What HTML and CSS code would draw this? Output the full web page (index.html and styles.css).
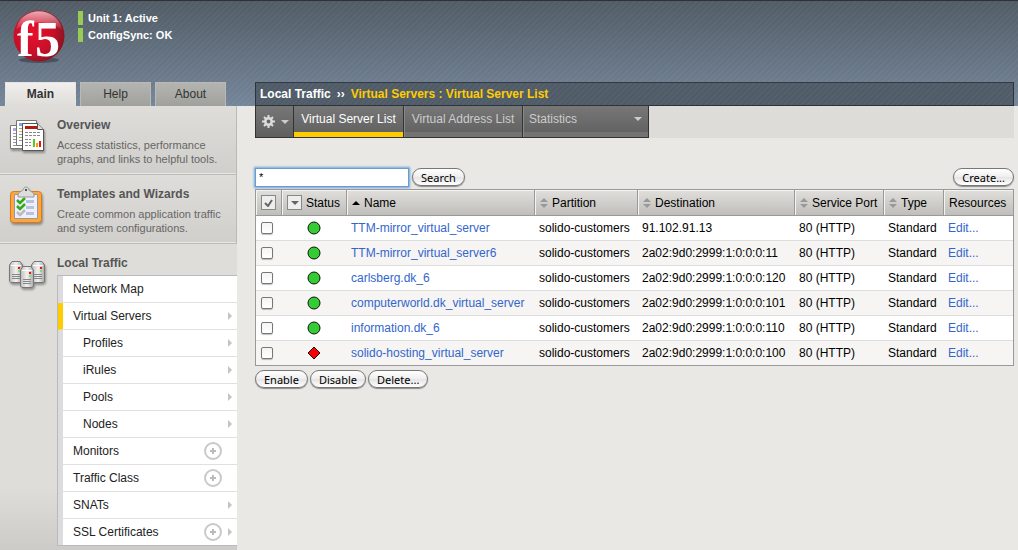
FILE: index.html
```html
<!DOCTYPE html>
<html lang="en">
<head>
<meta charset="utf-8">
<title>Virtual Server List</title>
<link rel="stylesheet" href="styles.css">
</head>
<body>
<svg class="defs" width="0" height="0" aria-hidden="true">
  <defs>
    <symbol id="sort" viewBox="0 0 8 10"><path d="M4 0 8 4H0zM0 6h8L4 10z" fill="#999"/></symbol>
    <symbol id="plus" viewBox="0 0 18 18"><circle cx="9" cy="9" r="8" fill="#fff" stroke="#c9c9c9" stroke-width="2"/><path d="M6 9h6M9 6v6" stroke="#bbb" stroke-width="2"/></symbol>
    <symbol id="arrow" viewBox="0 0 4 8"><path d="M0 0 4 4 0 8z" fill="#c4c4c4"/></symbol>
    <symbol id="up" viewBox="0 0 14 14"><circle cx="7" cy="7" r="6" fill="#3c3" stroke="#111"/></symbol>
    <symbol id="down" viewBox="0 0 14 14"><path d="M7 1 13 7 7 13 1 7z" fill="#f00" stroke="#111"/></symbol>
    <linearGradient id="srv" x2="1" y2="0"><stop offset="0" stop-color="#bbb"/><stop offset=".5" stop-color="#f2f2f2"/><stop offset="1" stop-color="#aaa"/></linearGradient>
    <symbol id="server" viewBox="0 0 14 23"><path d="M.5 4 3 .5h8L13.500 4v16L12 21.500H2L.5 20z" fill="url(#srv)" stroke="#777"/><path d="M2 4.500h10" stroke="#fff"/><path d="M3 13.500h8M3 15.500h8M3 17.500h8" stroke="#888"/><path d="M9 6h2v2H9z" fill="#f01020"/><path d="M9 9h2v2H9z" fill="#80e060"/></symbol>
  </defs>
</svg>

<header class="banner">
  <div class="banner-left">
    <div class="identity">
      <svg class="logo" width="54" height="60" viewBox="0 0 54 60" role="img" aria-label="f5">
        <defs>
          <radialGradient id="ball" cx=".4" cy=".45" r=".6"><stop offset="0" stop-color="#e8102c"/><stop offset=".65" stop-color="#c80f29"/><stop offset="1" stop-color="#8c1420"/></radialGradient>
          <linearGradient id="gloss" x2="0" y2="1"><stop offset="0" stop-color="#fff" stop-opacity=".65"/><stop offset="1" stop-color="#fff" stop-opacity=".05"/></linearGradient>
        </defs>
        <ellipse cx="27" cy="50" rx="20" ry="3" fill="#333c46" opacity=".6"/>
        <circle cx="27" cy="26" r="25.500" fill="url(#ball)"/>
        <path d="M4 20C8-5 46-5 50 20 38 10 16 10 4 20z" fill="url(#gloss)"/>
        <text x="5" y="46" class="logo-f">f</text>
        <text x="23" y="46" class="logo-5">5</text>
      </svg>
      <ul class="unit-status">
        <li>Unit 1: Active</li>
        <li>ConfigSync: OK</li>
      </ul>
    </div>
    <nav class="main-tabs">
      <a class="main-tab current" href="#">Main</a>
      <a class="main-tab" href="#">Help</a>
      <a class="main-tab" href="#">About</a>
    </nav>
  </div>
  <h1 class="crumbs"><span>Local Traffic</span><span>››</span><span class="crumb-here">Virtual Servers : Virtual Server List</span></h1>
</header>

<div class="page">
  <aside class="sidebar">
    <section class="panel">
      <svg class="panel-icon" width="38" height="38" viewBox="0 0 38 38" aria-hidden="true">
        <path d="M1.500 8.500h17v23h-17z" fill="#fff" stroke="#777"/>
        <path d="M4 11h4v3H4z" fill="#b8a0e8"/><path d="M4 16.500h5M4 19.500h5M4 22.500h5M4 25.500h5M4 28.500h5" stroke="#999"/>
        <path d="M7.500 3.500h20v25h-20z" fill="#fff" stroke="#777"/>
        <path d="M10 6h6v3h-6z" fill="#80a8e0"/><path d="M10 11.500h5M10 17.500h5M10 23.500h4" stroke="#999"/><path d="M10 14.500h4" stroke="#e8c020"/><path d="M10 20.500h4" stroke="#70d040"/>
        <path d="M13.500 6.500h15l6 6v21h-21z" fill="#fff" stroke="#555"/>
        <path d="M28.500 6.500v6h6" fill="#ddd" stroke="#555"/>
        <path d="M16 9h12v3H16z" fill="#b01c10"/>
        <path d="M16 15.500h16M16 18.500h16M16 22.500h6M16 25.500h6M16 28.500h6" stroke="#888" stroke-dasharray="3 1"/>
        <path d="M24 22h2v8h-2z" fill="#5c2"/><path d="M27 26h2v4h-2z" fill="#f90"/><path d="M30 24h2v6h-2z" fill="#e11"/>
      </svg>
      <div>
        <h2>Overview</h2>
        <p>Access statistics, performance graphs, and links to helpful tools.</p>
      </div>
    </section>
    <section class="panel">
      <svg class="panel-icon" width="38" height="42" viewBox="0 3 38 42" aria-hidden="true">
        <rect x="1.500" y="8.500" width="31" height="31" rx="3" fill="#fda640" stroke="#d97a18"/>
        <path d="M5.500 11.500h23v24h-23z" fill="#eef" stroke="#999"/>
        <path d="M17 17h8v3h-8zM17 23h8v3h-8zM17 29h8v3h-8z" fill="#b8c2dc"/>
        <path d="M8 17l3 3 5-5M8 23l3 3 5-5" fill="none" stroke="#3a1" stroke-width="2.500"/>
        <path d="M8 29l3 3 5-5" fill="none" stroke="#bbb" stroke-width="2.500"/>
        <path d="M9 12c0-3 3-3 5-5 1-4 5-4 6 0 2 2 5 2 5 5v2H9z" fill="#ddd" stroke="#999"/><circle cx="17" cy="7" r="1" fill="#222"/>
      </svg>
      <div>
        <h2>Templates and Wizards</h2>
        <p>Create common application traffic and system configurations.</p>
      </div>
    </section>
    <section class="panel panel-open">
      <svg class="panel-icon" width="38" height="36" viewBox="0 0 38 36" aria-hidden="true">
        <use href="#server" x="0" y="6" width="14" height="23"/>
        <use href="#server" x="22" y="6" width="14" height="23"/>
        <use href="#server" x="11" y="11" width="14" height="23"/>
      </svg>
      <div class="panel-body">
        <h2>Local Traffic</h2>
        <ul class="menu">
          <li><a href="#">Network Map</a></li>
          <li class="active"><a href="#">Virtual Servers</a><svg class="arrow"><use href="#arrow"/></svg></li>
          <li class="sub"><a href="#">Profiles</a><svg class="arrow"><use href="#arrow"/></svg></li>
          <li class="sub"><a href="#">iRules</a><svg class="arrow"><use href="#arrow"/></svg></li>
          <li class="sub"><a href="#">Pools</a><svg class="arrow"><use href="#arrow"/></svg></li>
          <li class="sub"><a href="#">Nodes</a><svg class="arrow"><use href="#arrow"/></svg></li>
          <li><a href="#">Monitors</a><svg class="plus"><use href="#plus"/></svg><span class="arrow"></span></li>
          <li><a href="#">Traffic Class</a><svg class="plus"><use href="#plus"/></svg><span class="arrow"></span></li>
          <li><a href="#">SNATs</a><svg class="arrow"><use href="#arrow"/></svg></li>
          <li><a href="#">SSL Certificates</a><svg class="plus"><use href="#plus"/></svg><svg class="arrow"><use href="#arrow"/></svg></li>
        </ul>
      </div>
    </section>
  </aside>

  <main class="content">
    <nav class="tabs">
      <button class="tab tab-gear" type="button" aria-label="Options">
        <svg width="13" height="13" viewBox="0 0 13 13"><path d="M6.500 0v13M0 6.500h13M2 2l9 9M11 2l-9 9" stroke="#ddd" stroke-width="2"/><circle cx="6.500" cy="6.500" r="3.200" fill="#666" stroke="#ddd" stroke-width="2.500"/></svg>
        <svg width="8" height="4" viewBox="0 0 8 4"><path d="M0 0h8L4 4z" fill="#ccc"/></svg>
      </button>
      <a class="tab tab-servers selected" href="#">Virtual Server List</a>
      <a class="tab tab-addresses" href="#">Virtual Address List</a>
      <a class="tab tab-wide" href="#">Statistics <svg width="8" height="4" viewBox="0 0 8 4"><path d="M0 0h8L4 4z" fill="#ccc"/></svg></a>
    </nav>

    <form class="toolbar">
      <input class="search" type="text" value="*" aria-label="Search filter">
      <button class="pill" type="button">Search</button>
      <button class="pill create" type="button">Create...</button>
    </form>

    <table class="servers">
      <colgroup><col class="c-check"><col class="c-status"><col><col class="c-part"><col class="c-dest"><col class="c-port"><col class="c-type"><col class="c-res"></colgroup>
      <thead>
        <tr>
          <th><div class="head"><button class="mini" type="button" aria-label="Select all"><svg width="9" height="8" viewBox="0 0 9 8"><path d="M1 4l3 3 4-6" fill="none" stroke="#666" stroke-width="2"/></svg></button></div></th>
          <th><div class="head"><button class="mini" type="button" aria-label="Filter by status"><svg width="8" height="4" viewBox="0 0 8 4"><path d="M0 0h8L4 4z" fill="#666"/></svg></button>Status</div></th>
          <th><div class="head"><svg width="8" height="4" viewBox="0 0 8 4"><path d="M0 4h8L4 0z" fill="#000"/></svg>Name</div></th>
          <th><div class="head"><svg class="sort"><use href="#sort"/></svg>Partition</div></th>
          <th><div class="head"><svg class="sort"><use href="#sort"/></svg>Destination</div></th>
          <th><div class="head"><svg class="sort"><use href="#sort"/></svg>Service Port</div></th>
          <th><div class="head"><svg class="sort"><use href="#sort"/></svg>Type</div></th>
          <th><div class="head">Resources</div></th>
        </tr>
      </thead>
      <tbody>
        <tr><td><input type="checkbox" aria-label="TTM-mirror_virtual_server"></td><td class="state"><svg><use href="#up"/></svg></td><td><a href="#">TTM-mirror_virtual_server</a></td><td>solido-customers</td><td>91.102.91.13</td><td>80 (HTTP)</td><td>Standard</td><td><a href="#">Edit...</a></td></tr>
        <tr><td><input type="checkbox" aria-label="TTM-mirror_virtual_server6"></td><td class="state"><svg><use href="#up"/></svg></td><td><a href="#">TTM-mirror_virtual_server6</a></td><td>solido-customers</td><td>2a02:9d0:2999:1:0:0:0:11</td><td>80 (HTTP)</td><td>Standard</td><td><a href="#">Edit...</a></td></tr>
        <tr><td><input type="checkbox" aria-label="carlsberg.dk_6"></td><td class="state"><svg><use href="#up"/></svg></td><td><a href="#">carlsberg.dk_6</a></td><td>solido-customers</td><td>2a02:9d0:2999:1:0:0:0:120</td><td>80 (HTTP)</td><td>Standard</td><td><a href="#">Edit...</a></td></tr>
        <tr><td><input type="checkbox" aria-label="computerworld.dk_virtual_server"></td><td class="state"><svg><use href="#up"/></svg></td><td><a href="#">computerworld.dk_virtual_server</a></td><td>solido-customers</td><td>2a02:9d0:2999:1:0:0:0:101</td><td>80 (HTTP)</td><td>Standard</td><td><a href="#">Edit...</a></td></tr>
        <tr><td><input type="checkbox" aria-label="information.dk_6"></td><td class="state"><svg><use href="#up"/></svg></td><td><a href="#">information.dk_6</a></td><td>solido-customers</td><td>2a02:9d0:2999:1:0:0:0:110</td><td>80 (HTTP)</td><td>Standard</td><td><a href="#">Edit...</a></td></tr>
        <tr><td><input type="checkbox" aria-label="solido-hosting_virtual_server"></td><td class="state"><svg><use href="#down"/></svg></td><td><a href="#">solido-hosting_virtual_server</a></td><td>solido-customers</td><td>2a02:9d0:2999:1:0:0:0:100</td><td>80 (HTTP)</td><td>Standard</td><td><a href="#">Edit...</a></td></tr>
      </tbody>
    </table>

    <div class="actions">
      <button class="pill" type="button">Enable</button>
      <button class="pill" type="button">Disable</button>
      <button class="pill" type="button">Delete...</button>
    </div>
  </main>
</div>
</body>
</html>
```

FILE: styles.css
```css
* { box-sizing: border-box; }

body {
  margin: 0;
  min-height: 100vh;
  display: flex;
  flex-direction: column;
  background: #e9e8e4;
  color: #000;
  font: 12px/16px "Liberation Sans", Arial, sans-serif;
}

ul { list-style: none; margin: 0; padding: 0; }
h1, h2, p { margin: 0; }
a { color: inherit; text-decoration: none; }
svg { flex: none; }
.defs { position: absolute; }

.banner {
  display: grid;
  grid-template-columns: 237px 1fr;
  column-gap: 18px;
  align-items: end;
  padding-right: 4px;
  border-top: 1px solid #332f35;
  background:
    repeating-linear-gradient(135deg, rgba(255,255,255,.03) 0 2px, transparent 2px 4px),
    linear-gradient(#505b65, #75869a);
}

.identity { display: flex; gap: 12px; padding: 9px 0 0 12px; height: 81px; }
.logo { overflow: visible; }
.logo-f, .logo-5 { font: bold 50px "Liberation Serif", serif; fill: #fff; }
.unit-status { padding-top: 1px; font-weight: bold; font-size: 11px; line-height: 14px; color: #fff; }
.unit-status li { border-left: 5px solid #9c5; padding-left: 5px; margin-bottom: 3px; }

.main-tabs { display: flex; gap: 4px; padding-left: 5px; }
.main-tab {
  width: 71px;
  height: 24px;
  border: 1px solid #b9b9b5;
  border-bottom: 0;
  background: linear-gradient(#b4b5b0, #a0a19c);
  color: #333;
  line-height: 22px;
  text-align: center;
}
.main-tab.current { background: linear-gradient(#f0efed, #deddd9); border-color: #e6e5e2; font-weight: bold; }

.crumbs {
  display: flex;
  gap: 6px;
  height: 24px;
  padding-left: 4px;
  border: 1px solid #2d3338;
  border-top-color: #333a41;
  background:
    repeating-linear-gradient(135deg, rgba(255,255,255,.03) 0 2px, transparent 2px 4px),
    #4f5b67;
  color: #fff;
  font-size: 12px;
  line-height: 22px;
}
.crumb-here { color: #fc0; }

.page { flex: 1; display: grid; grid-template-columns: 237px 1fr; column-gap: 18px; }

.sidebar { display: flex; flex-direction: column; background: #deddd9; color: #666; }
.panel {
  display: grid;
  grid-template-columns: 38px 1fr;
  column-gap: 10px;
  height: 69px;
  padding: 11px 8px 0 9px;
  border-right: 1px solid #b9b9b7;
  border-bottom: 1px solid #bbb;
  background: linear-gradient(#deddd9, #d0cfcb);
  box-shadow: inset 0 -1px #e8e7e4;
}
.panel h2 { color: #555; font-size: 12px; line-height: 16px; }
.panel p { margin-top: 5px; font-size: 11px; line-height: 14px; }
.panel-icon { filter: drop-shadow(1px 2px 1px rgba(0,0,0,.35)); }
.panel-open {
  flex: 1;
  height: auto;
  padding-right: 0;
  padding-bottom: 4px;
  border: 0;
  background: linear-gradient(#deddd9 80%, #cccbc7);
  box-shadow: none;
}
.menu {
  margin-top: 4px;
  border: 1px solid #bab9bd;
  border-right: 0;
  background: #fff;
  color: #222;
}
.menu li {
  display: flex;
  align-items: center;
  gap: 6px;
  height: 27px;
  padding: 0 5px 0 10px;
  border-left: 5px solid #dcdbde;
  border-bottom: 1px solid #e0e0e0;
  line-height: 26px;
}
.menu li:last-child { border-bottom: 0; height: 26px; }
.menu a { flex: 1; }
.menu .active { border-left-color: #fc0; }
.menu .sub { padding-left: 20px; }
.arrow { width: 4px; height: 8px; }
.plus { width: 18px; height: 18px; }

.content { min-width: 0; padding-right: 4px; }

.tabs { display: flex; height: 32px; background: #dddcd8; }
.tab {
  display: flex;
  padding: 0 6px;
  border: 1px solid #333;
  border-width: 0 1px 1px 0;
  background: linear-gradient(#777, #5f5f5f);
  box-shadow: inset 1px 0 #888, inset 0 -5px #737373;
  color: #ccc;
  line-height: 27px;
  white-space: nowrap;
}
.tab.selected { color: #fff; box-shadow: inset 0 -5px #fc0; }
.tab-servers { width: 110px; justify-content: center; }
.tab-addresses { width: 119px; justify-content: center; }
.tab-gear {
  width: 39px;
  align-items: center;
  gap: 6px;
  border-left: 1px solid #333;
  box-shadow: none;
}
.tab-wide { width: 126px; justify-content: space-between; }
.tab-wide svg { margin-top: 11px; }

.toolbar { display: flex; align-items: center; gap: 3px; margin-top: 29px; height: 20px; }
.search {
  width: 154px;
  height: 19px;
  padding: 0 3px;
  border: 1px solid #6c9ccb;
  outline: 0;
  box-shadow: 0 0 2px 1px #6ca6dc;
  background: #fff;
  font: 11px "Liberation Sans", Arial, sans-serif;
}
.pill {
  height: 18px;
  padding: 0 8px;
  border: 1px solid #777;
  border-radius: 10px;
  background: linear-gradient(#fff, #eee 50%, #e4e4e4 51%, #fff);
  box-shadow: 0 1px 1px rgba(0,0,0,.4);
  color: #000;
  font: 11px/15px "Noto Sans", sans-serif;
  white-space: nowrap;
}
.create { margin-left: auto; }

.servers {
  width: 100%;
  margin-top: 2px;
  border: 1px solid #999;
  border-spacing: 0;
  table-layout: fixed;
  background: #fff;
  white-space: nowrap;
}
.c-check { width: 25px; }
.c-status { width: 65px; }
.c-part { width: 103px; }
.c-dest { width: 157px; }
.c-port { width: 89px; }
.c-type { width: 60px; }
.c-res { width: 70px; }

.servers th {
  height: 26px;
  padding: 0 0 0 5px;
  border-left: 1px solid #999;
  border-bottom: 1px solid #999;
  background: linear-gradient(#e0dfdc, #bfbeba);
  box-shadow: inset 1px 1px #f4f4f2;
  font-weight: normal;
  text-align: left;
}
.servers th:first-child { border-left: 0; }
.head { display: flex; align-items: center; gap: 4px; }
.sort { width: 8px; height: 10px; }
.mini {
  display: flex;
  align-items: center;
  justify-content: center;
  width: 15px;
  height: 15px;
  padding: 0;
  border: 1px solid #888;
  background: #eee;
}
.servers td { height: 25px; padding: 0 0 0 5px; border-bottom: 1px solid #ddd; }
.servers tr:nth-child(even) td { background: #f6f5f3; }
.servers tr:last-child td { border-bottom: 0; height: 24px; }
.servers td a { color: #36c; }
.servers input {
  appearance: none;
  display: block;
  width: 12px;
  height: 12px;
  margin: 0;
  border: 1px solid #777;
  border-radius: 2px;
  background: linear-gradient(#f4f4f4, #fff);
  box-shadow: 0 1px 1px rgba(0,0,0,.25);
}
.servers .state { padding: 0; }
.state svg { display: block; width: 14px; height: 14px; margin: 0 auto; }

.actions { display: flex; gap: 2px; margin-top: 4px; }
```
